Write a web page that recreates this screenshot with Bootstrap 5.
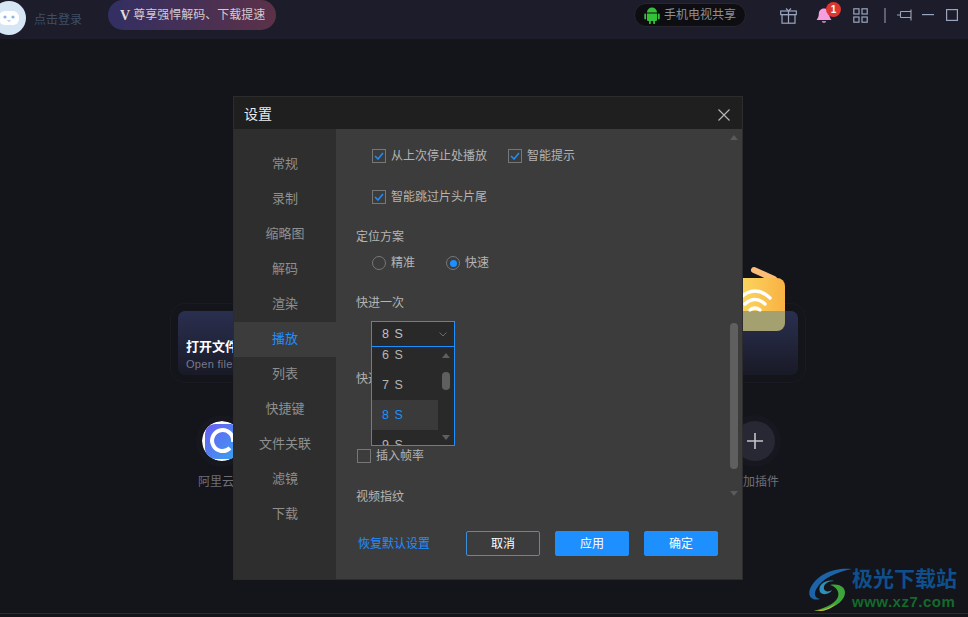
<!DOCTYPE html>
<html lang="zh-CN">
<head>
    <meta charset="UTF-8">
    <title>设置</title>
    <link href="https://cdn.jsdelivr.net/npm/bootstrap@5.3.0/dist/css/bootstrap.min.css" rel="stylesheet">
    <style>
        html, body { height: 617px; overflow: hidden; }
        body {
            background: #14141b;
            font-family: "Liberation Sans", "Noto Sans CJK SC", sans-serif;
            font-size: 12px;
            position: relative;
            color: #b4b4b4;
        }
        .topbar { height: 39px; background: #1c1c2b; }
        .avatar { width: 34px; height: 34px; border-radius: 50%; margin: -3px 0 0 -8px; background: #d6e6f5; flex: none; }
        .login-text { color: #3f4f63; margin-left: 8px; width: 49px; white-space: nowrap; }
        .vip-pill {
            height: 30px; width: 168px; margin: 0 0 9px 25px; border-radius: 15px; padding-left: 12px; gap: 3px;
            background: linear-gradient(90deg, #322f63, #5c3148); color: #d8c9cf; white-space: nowrap;
        }
        .vip-v { font-family: "Liberation Serif", serif; font-weight: 700; font-size: 14px; color: #e8dcd8; }
        .tv-pill {
            width: 112px; height: 24px; border-radius: 12px; background: #0e0e12; border: 1px solid #26262f;
            color: #8b8f98; padding-left: 9px; gap: 4px; white-space: nowrap; margin-bottom: 9px; margin-right: 34px;
        }
        .top-icons { gap: 0; margin-bottom: 9px; }
        .bell-wrap { position: relative; width: 18px; height: 18px; margin-left: 18px; }
        .bell-badge {
            position: absolute; left: 11px; top: -4px; width: 15px; height: 15px; border-radius: 50%;
            background: #dc3632; color: #fff; font-size: 10px; font-weight: 700; line-height: 15px; text-align: center;
        }
        .home-row { width: 620px; margin: 272px 0 0 178px; }
        .home-card {
            width: 220px; height: 64px; border-radius: 7px; position: relative; padding: 27px 0 0 8px;
            background: linear-gradient(180deg, #2a2f50, #191a26);
            box-shadow: 0 0 0 7px #14141b, 0 0 0 8px #1a1a22;
        }
        .home-title { color: #fff; font-weight: 700; font-size: 13px; line-height: 17px; }
        .home-sub { color: #757a8b; font-size: 11px; line-height: 14px; margin-top: 2px; letter-spacing: .3px; }
        .wifi-tile { position: absolute; left: 157px; top: -47px; }
        .plugin-row { width: 620px; margin: 46px 0 0 178px; }
        .plugin { width: 88px; color: #6d7079; text-align: center; font-size: 12px; white-space: nowrap; }
        .plugin-icon { width: 40px; height: 40px; border-radius: 50%; margin: 0 auto 12px; display: block; box-shadow: 0 0 0 6px #17171f; }
        .plugin-add { background: #272834; }
        .bottom-line { position: absolute; left: 0; right: 0; top: 613px; height: 1px; background: #2a2a33; }

        .settings-dialog {
            position: absolute; left: 233px; top: 96px; width: 510px; height: 484px;
            border: 1px solid #2c2c2c; background: #3c3c3c;
        }
        .dlg-head { height: 32px; background: #1f1f1f; color: #ececec; font-size: 14px; padding: 3px 12px 0 10px; }
        .dlg-body { height: 450px; }
        .side-nav { width: 102px; background: #2e2e2e; padding-top: 18px; flex: none; }
        .side-item { height: 35px; line-height: 34px; text-align: center; font-size: 13px; color: #8f8f8f; }
        .side-item.on { background: #3c3c3c; color: #1e8fff; }
        .pane { flex: 1; position: relative; min-width: 0; }
        .pane-scroll { height: 374px; overflow: hidden; padding: 16px 0 0 20px; }
        .opt { color: #b4b4b4; height: 22px; gap: 5px; white-space: nowrap; }
        .box {
            width: 14px; height: 14px; border: 1px solid #777; flex: none; display: flex; align-items: center; justify-content: center;
        }
        .dot { width: 14px; height: 14px; border: 1px solid #777; border-radius: 50%; flex: none; display: flex; align-items: center; justify-content: center; }
        .dot i { width: 7px; height: 7px; border-radius: 50%; background: #1e8fff; display: block; }
        .sec-label { color: #b4b4b4; line-height: 18px; white-space: nowrap; }
        .pick-box {
            width: 84px; height: 26px; margin: 9px 0 0 15px; border: 1px solid #1e8fff; background: #292929;
            color: #c0c0c0; padding: 0 7px 0 10px; font-size: 12.5px; letter-spacing: 1px;
        }
        .pick-menu {
            position: absolute; left: 35px; top: 217px; width: 84px; height: 100px; border: 1px solid #1e8fff;
            background: #292929; overflow: hidden; z-index: 2;
        }
        .pick-list { margin-top: -7px; width: 66px; }
        .pick-list div { height: 30px; line-height: 30px; padding-left: 10px; color: #b4b4b4; font-size: 12.5px; letter-spacing: 1px; }
        .pick-list .on { background: #3a3a3a; color: #1e8fff; }
        .pick-thumb { position: absolute; right: 4px; top: 25px; width: 8px; height: 18px; border-radius: 4px; background: #5f5f5f; }
        .pick-up, .pick-down, .rail-up, .rail-down { position: absolute; width: 0; height: 0; border-left: 4px solid transparent; border-right: 4px solid transparent; }
        .pick-up { right: 4px; top: 6px; border-bottom: 5px solid #5f5f5f; }
        .pick-down { right: 4px; top: 88px; border-top: 5px solid #5f5f5f; }
        .rail-up { right: 4px; top: 6px; border-bottom: 5px solid #5a5a5a; }
        .rail-down { right: 4px; top: 362px; border-top: 5px solid #5a5a5a; }
        .rail-thumb { position: absolute; right: 4px; top: 194px; width: 8px; height: 146px; border-radius: 4px; background: #5f5f5f; }
        .dlg-foot { height: 76px; padding: 5px 24px 0 22px; }
        .reset-link { color: #1e8fff; font-size: 12px; text-decoration: none; margin-right: auto; }
        .foot-btn {
            width: 74px; height: 25px; padding: 0; font-size: 12px; border-radius: 2px; color: #fff;
            background: #1e8fff; border: 1px solid #1e8fff; line-height: 22px; margin-left: 15px;
        }
        .foot-btn.ghost { background: transparent; border-color: #3c8fdc; margin-right: 0; }

        .mark-logo { position: absolute; left: 808px; top: 566px; width: 152px; height: 46px; }
        .mark-cn { position: absolute; left: 44px; top: 0; color: #0f4f8c; font-size: 21px; font-weight: 700; line-height: 26px; white-space: nowrap; }
        .mark-en { position: absolute; left: 44px; top: 27px; color: #14692c; font-size: 15px; font-weight: 700; line-height: 17px; white-space: nowrap; letter-spacing: .5px; }
    </style>
</head>
<body>
    <div class="topbar d-flex align-items-center">
        <div class="avatar d-flex align-items-center justify-content-center">
            <svg width="24" height="20" viewBox="0 0 24 20"><rect x="2" y="3" width="20" height="14" rx="6" fill="#fff"/><circle cx="8" cy="9" r="1.6" fill="#8eb6e2"/><circle cx="16" cy="9" r="1.6" fill="#8eb6e2"/><path d="M10.5 12.5q1.5 1.4 3 0" stroke="#8eb6e2" fill="none"/></svg>
        </div>
        <span class="login-text">点击登录</span>
        <div class="vip-pill d-flex align-items-center"><span class="vip-v">V</span><span>尊享强悍解码、下载提速</span></div>
        <div class="flex-grow-1"></div>
        <div class="tv-pill d-flex align-items-center">
            <svg width="16" height="18" viewBox="0 0 16 18"><path d="M3 6.5a5 5 0 0 1 10 0zM3 7.5h10v6.5a1 1 0 0 1-1 1h-1v2.2a.9.9 0 0 1-1.8 0V15H6.8v2.2a.9.9 0 0 1-1.8 0V15H4a1 1 0 0 1-1-1zM.3 8.4a.9.9 0 0 1 1.8 0v4.2a.9.9 0 0 1-1.8 0zM13.9 8.4a.9.9 0 0 1 1.8 0v4.2a.9.9 0 0 1-1.8 0z" fill="#35c23a"/></svg>
            <span>手机电视共享</span>
        </div>
        <div class="top-icons d-flex align-items-center">
            <svg width="17" height="17" viewBox="0 0 17 17" fill="none" stroke="#9aa5bd" stroke-width="1.2"><rect x=".7" y="4" width="15.6" height="3.6"/><rect x="2" y="7.6" width="13" height="8.6"/><path d="M8.5 4v12.2M6 1.500l2.500 2.500 2.500-2.500"/></svg>
            <div class="bell-wrap">
                <svg width="18" height="18" viewBox="0 0 18 18"><path d="M9 1.500c-3.400 0-5.200 2.600-5.200 5.600 0 3-1.300 4.600-2.300 6h15c-1-1.400-2.300-3-2.300-6 0-3-1.800-5.600-5.200-5.600zM6.800 14.200a2.300 2.300 0 0 0 4.400 0z" fill="#f59fde"/></svg>
                <span class="bell-badge">1</span>
            </div>
            <svg style="margin-left:20px" width="15" height="15" viewBox="0 0 15 15" fill="none" stroke="#9aa5bd" stroke-width="1.2"><rect x=".8" y=".8" width="5.200" height="5.200"/><rect x="9" y=".8" width="5.200" height="5.200"/><rect x=".8" y="9" width="5.200" height="5.200"/><rect x="9" y="9" width="5.200" height="5.200"/></svg>
            <svg style="margin-left:16px" width="2" height="15" viewBox="0 0 2 15"><rect width="1" height="15" x=".5" fill="#9aa5bd"/></svg>
            <svg style="margin-left:11px" width="15" height="12" viewBox="0 0 15 12" fill="none" stroke="#9aa5bd" stroke-width="1.100"><path d="M0 6h3M3.500 2.500h10.500M3.500 8.500h10.500M3.500 2.500v6M14 .5v11"/></svg>
            <svg style="margin-left:10px" width="12" height="2" viewBox="0 0 12 2"><rect width="12" height="1.200" fill="#9aa5bd"/></svg>
            <svg style="margin-left:12px;margin-right:10px" width="12" height="12" viewBox="0 0 12 12" fill="none" stroke="#9aa5bd" stroke-width="1.200"><rect x=".6" y=".6" width="10.800" height="10.800"/></svg>
        </div>
    </div>

    <div class="home-row d-flex justify-content-between">
        <div class="home-card">
            <div class="home-title">打开文件</div>
            <div class="home-sub">Open file</div>
        </div>
        <div class="home-card">
            <svg class="wifi-tile" width="52" height="68" viewBox="0 0 52 68">
                <defs>
                    <linearGradient id="tileFill" x1="0" y1="0" x2="1" y2="0"><stop offset="0" stop-color="#fbdc62"/><stop offset="1" stop-color="#f9b144"/></linearGradient>
                </defs>
                <path d="M19 6l20 9" stroke="#fbbc79" stroke-width="6" stroke-linecap="round"/>
                <path d="M0 14h42a8 8 0 0 1 8 8v25H0z" fill="url(#tileFill)"/>
                <path d="M0 47h50v12a8 8 0 0 1-8 8H0z" fill="#a5a070"/>
                <g fill="none" stroke="#fff" stroke-width="3.500" stroke-linecap="round">
                    <path d="M5 34q15-14 30 0"/><path d="M10 40q10-9 20 0"/><path d="M15 46q5-4 10 0"/>
                </g>
            </svg>
        </div>
    </div>

    <div class="plugin-row d-flex justify-content-between">
        <div class="plugin">
            <svg class="plugin-icon" width="40" height="40" viewBox="0 0 40 40">
                <defs><linearGradient id="aliFill" x1="0" y1="0" x2="1" y2="1"><stop offset="0" stop-color="#6a5cf5"/><stop offset="1" stop-color="#36a6ee"/></linearGradient></defs>
                <circle cx="20" cy="20" r="20" fill="#fff"/>
                <rect x="3" y="3" width="36" height="35" rx="10" fill="url(#aliFill)"/>
                <path d="M28 27a10.500 10.500 0 1 1 3-6" fill="none" stroke="#fff" stroke-width="4"/>
            </svg>
            <span>阿里云盘</span>
        </div>
        <div class="plugin" style="margin-right:-1px">
            <div class="plugin-icon plugin-add d-flex align-items-center justify-content-center">
                <svg width="16" height="16" viewBox="0 0 16 16"><path d="M8 0v16M0 8h16" stroke="#c4c4c8" stroke-width="1.600"/></svg>
            </div>
            <span>添加插件</span>
        </div>
    </div>

    <div class="bottom-line"></div>

    <div class="settings-dialog">
        <div class="dlg-head d-flex align-items-center justify-content-between">
            <span>设置</span>
            <svg width="12" height="12" viewBox="0 0 12 12"><path d="M.5.500l11 11M11.500.500l-11 11" stroke="#b8b8b8" stroke-width="1.100"/></svg>
        </div>
        <div class="dlg-body d-flex">
            <div class="side-nav">
                <div class="side-item">常规</div>
                <div class="side-item">录制</div>
                <div class="side-item">缩略图</div>
                <div class="side-item">解码</div>
                <div class="side-item">渲染</div>
                <div class="side-item on">播放</div>
                <div class="side-item">列表</div>
                <div class="side-item">快捷键</div>
                <div class="side-item">文件关联</div>
                <div class="side-item">滤镜</div>
                <div class="side-item">下载</div>
            </div>
            <div class="pane">
                <div class="pane-scroll">
                    <div class="d-flex ps-3" style="gap:21px">
                        <div class="opt d-flex align-items-center"><span class="box"><svg width="10" height="8" viewBox="0 0 10 8"><path d="M1 4l3 3 5-6" fill="none" stroke="#1e8fff" stroke-width="1.500"/></svg></span>从上次停止处播放</div>
                        <div class="opt d-flex align-items-center"><span class="box"><svg width="10" height="8" viewBox="0 0 10 8"><path d="M1 4l3 3 5-6" fill="none" stroke="#1e8fff" stroke-width="1.500"/></svg></span>智能提示</div>
                    </div>
                    <div class="opt d-flex align-items-center ps-3" style="margin-top:19px"><span class="box"><svg width="10" height="8" viewBox="0 0 10 8"><path d="M1 4l3 3 5-6" fill="none" stroke="#1e8fff" stroke-width="1.500"/></svg></span>智能跳过片头片尾</div>
                    <div class="sec-label" style="margin-top:20px">定位方案</div>
                    <div class="d-flex ps-3" style="gap:31px;margin-top:6px">
                        <div class="opt d-flex align-items-center"><span class="dot"></span>精准</div>
                        <div class="opt d-flex align-items-center"><span class="dot"><i></i></span>快速</div>
                    </div>
                    <div class="sec-label" style="margin-top:20px">快进一次</div>
                    <div class="pick-box d-flex align-items-center justify-content-between">
                        <span>8 S</span>
                        <svg width="8" height="5" viewBox="0 0 8 5"><path d="M.5.500L4 4 7.500.500" fill="none" stroke="#6a6a6a"/></svg>
                    </div>
                    <div class="sec-label" style="margin-top:23px">快进多次</div>
                    <div class="opt d-flex align-items-center" style="margin-top:57px;margin-left:1px"><span class="box"></span>插入帧率</div>
                    <div class="sec-label" style="margin-top:21px">视频指纹</div>
                </div>
                <div class="pick-menu">
                    <div class="pick-list">
                        <div>6 S</div>
                        <div>7 S</div>
                        <div class="on">8 S</div>
                        <div>9 S</div>
                    </div>
                    <span class="pick-up"></span>
                    <span class="pick-thumb"></span>
                    <span class="pick-down"></span>
                </div>
                <span class="rail-up"></span>
                <span class="rail-thumb"></span>
                <span class="rail-down"></span>
                <div class="dlg-foot d-flex align-items-center">
                    <a class="reset-link" href="#">恢复默认设置</a>
                    <button type="button" class="btn foot-btn ghost">取消</button>
                    <button type="button" class="btn foot-btn">应用</button>
                    <button type="button" class="btn foot-btn">确定</button>
                </div>
            </div>
        </div>
    </div>

    <div class="mark-logo">
        <svg width="44" height="44" viewBox="0 0 44 44" style="position:absolute;left:0;top:1px">
            <path d="M44 2C28 0 9 6 2 22c-3 8 3 12 10 10-5-1-7-5-3-11C14 12 28 5 44 2z" fill="#1c63a8"/>
            <path d="M12 25c-3-7 6-13 14-11-6 0-11 3-10 8 1 3 5 3 8 1-2 4-9 6-12 2z" fill="#2f8fb8"/>
            <path d="M22 18c10-2 18 3 14 12-4 8-15 13-30 14 11-3 21-7 24-14 2-6-3-11-8-12z" fill="#3ea43c"/>
            <path d="M6 44c9-1 17-3 22-8-4 6-12 9-22 8z" fill="#c1c22f"/>
        </svg>
        <div class="mark-cn">极光下载站</div>
        <div class="mark-en">www.xz7.com</div>
    </div>

    <script src="https://cdn.jsdelivr.net/npm/bootstrap@5.3.0/dist/js/bootstrap.bundle.min.js"></script>
</body>
</html>
